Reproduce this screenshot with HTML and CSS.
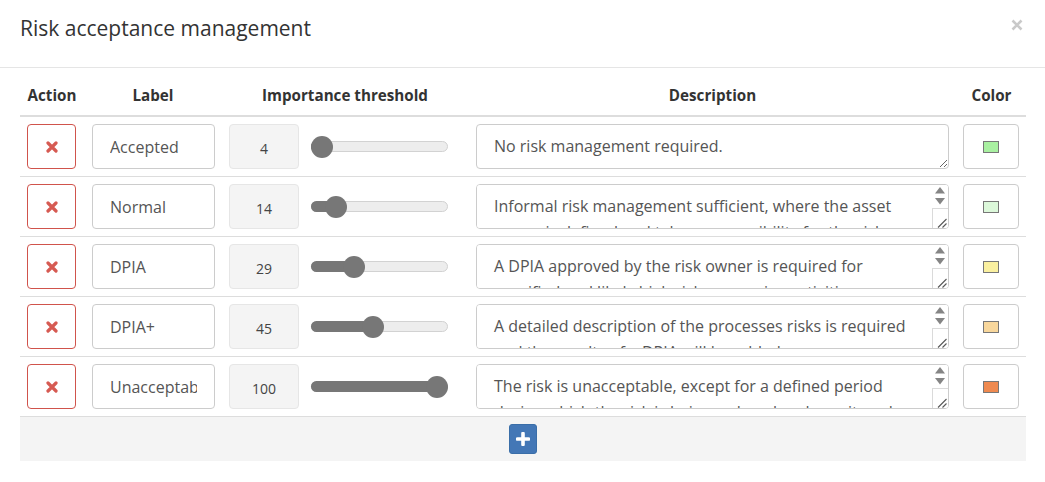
FILE: index.html
```html
<!DOCTYPE html>
<html>
<head>
<meta charset="utf-8">
<link rel="stylesheet" href="styles.css">
</head>
<body>
<div class="modal">
  <div class="modal-header">
    <h4 class="modal-title">Risk acceptance management</h4>
    <button class="close" type="button" aria-label="Close"><svg viewBox="0 0 12 12" width="12" height="12"><path d="M1.5 1.5L10.5 10.5M10.5 1.5L1.5 10.5" stroke="#c9c9c9" stroke-width="2.6"/></svg></button>
  </div>
  <div class="modal-body">
    <table class="grid">
      <colgroup>
        <col class="c-action"><col class="c-label"><col class="c-imp"><col class="c-desc"><col class="c-color">
      </colgroup>
      <thead>
        <tr><th>Action</th><th>Label</th><th>Importance threshold</th><th>Description</th><th>Color</th></tr>
      </thead>
      <tbody>
        <tr>
          <td class="td-action"><button class="btn-del"><svg viewBox="0 0 12 12" width="12" height="12"><path d="M2 2L10 10M10 2L2 10" stroke="#d65a52" stroke-width="3.2" stroke-linecap="round"/></svg></button></td>
          <td class="td-label"><input class="txt" value="Accepted"></td>
          <td class="td-imp"><div class="imp"><div class="num">4</div><div class="slider"><div class="fill" style="width:11px"></div><div class="thumb" style="left:0px"></div></div></div></td>
          <td class="td-desc"><div class="desc-wrap"><textarea class="desc">No risk management required.</textarea></div></td>
          <td class="td-color"><button class="btn-color"><span class="swatch" style="background:#a9f0a1"></span></button></td>
        </tr>
        <tr>
          <td class="td-action"><button class="btn-del"><svg viewBox="0 0 12 12" width="12" height="12"><path d="M2 2L10 10M10 2L2 10" stroke="#d65a52" stroke-width="3.2" stroke-linecap="round"/></svg></button></td>
          <td class="td-label"><input class="txt" value="Normal"></td>
          <td class="td-imp"><div class="imp"><div class="num">14</div><div class="slider"><div class="fill" style="width:25px"></div><div class="thumb" style="left:14px"></div></div></div></td>
          <td class="td-desc"><div class="desc-wrap"><textarea class="desc scroll">Informal risk management sufficient, where the asset owner is defined and takes responsibility for the risk.</textarea><span class="sbar"><svg viewBox="0 0 16 43" width="16" height="43"><path d="M3 8.5L8 2L13 8.5Z" fill="#858585"/><path d="M3 13L13 13L8 19.5Z" fill="#858585"/><path d="M0 23.5H16M0.5 23.5V43" stroke="#dadada" stroke-width="1" fill="none"/><path d="M14.5 34L6 42.5M14.5 38.5L10.5 42.5" stroke="#5a5a5a" stroke-width="1.1" fill="none"/></svg></span></div></td>
          <td class="td-color"><button class="btn-color"><span class="swatch" style="background:#dcf8da"></span></button></td>
        </tr>
        <tr>
          <td class="td-action"><button class="btn-del"><svg viewBox="0 0 12 12" width="12" height="12"><path d="M2 2L10 10M10 2L2 10" stroke="#d65a52" stroke-width="3.2" stroke-linecap="round"/></svg></button></td>
          <td class="td-label"><input class="txt" value="DPIA"></td>
          <td class="td-imp"><div class="imp"><div class="num">29</div><div class="slider"><div class="fill" style="width:43px"></div><div class="thumb" style="left:32px"></div></div></div></td>
          <td class="td-desc"><div class="desc-wrap"><textarea class="desc scroll">A DPIA approved by the risk owner is required for specified and likely high risk processing activities.</textarea><span class="sbar"><svg viewBox="0 0 16 43" width="16" height="43"><path d="M3 8.5L8 2L13 8.5Z" fill="#858585"/><path d="M3 13L13 13L8 19.5Z" fill="#858585"/><path d="M0 23.5H16M0.5 23.5V43" stroke="#dadada" stroke-width="1" fill="none"/><path d="M14.5 34L6 42.5M14.5 38.5L10.5 42.5" stroke="#5a5a5a" stroke-width="1.1" fill="none"/></svg></span></div></td>
          <td class="td-color"><button class="btn-color"><span class="swatch" style="background:#faf0a0"></span></button></td>
        </tr>
        <tr>
          <td class="td-action"><button class="btn-del"><svg viewBox="0 0 12 12" width="12" height="12"><path d="M2 2L10 10M10 2L2 10" stroke="#d65a52" stroke-width="3.2" stroke-linecap="round"/></svg></button></td>
          <td class="td-label"><input class="txt" value="DPIA+"></td>
          <td class="td-imp"><div class="imp"><div class="num">45</div><div class="slider"><div class="fill" style="width:62px"></div><div class="thumb" style="left:51px"></div></div></div></td>
          <td class="td-desc"><div class="desc-wrap"><textarea class="desc scroll">A detailed description of the processes risks is required and the results of a DPIA will be added.</textarea><span class="sbar"><svg viewBox="0 0 16 43" width="16" height="43"><path d="M3 8.5L8 2L13 8.5Z" fill="#858585"/><path d="M3 13L13 13L8 19.5Z" fill="#858585"/><path d="M0 23.5H16M0.5 23.5V43" stroke="#dadada" stroke-width="1" fill="none"/><path d="M14.5 34L6 42.5M14.5 38.5L10.5 42.5" stroke="#5a5a5a" stroke-width="1.1" fill="none"/></svg></span></div></td>
          <td class="td-color"><button class="btn-color"><span class="swatch" style="background:#f8d79c"></span></button></td>
        </tr>
        <tr>
          <td class="td-action"><button class="btn-del"><svg viewBox="0 0 12 12" width="12" height="12"><path d="M2 2L10 10M10 2L2 10" stroke="#d65a52" stroke-width="3.2" stroke-linecap="round"/></svg></button></td>
          <td class="td-label"><input class="txt" value="Unacceptable"></td>
          <td class="td-imp"><div class="imp"><div class="num">100</div><div class="slider"><div class="fill" style="width:126px"></div><div class="thumb" style="left:115px"></div></div></div></td>
          <td class="td-desc"><div class="desc-wrap"><textarea class="desc scroll">The risk is unacceptable, except for a defined period during which the risk is being reduced and monitored.</textarea><span class="sbar"><svg viewBox="0 0 16 43" width="16" height="43"><path d="M3 8.5L8 2L13 8.5Z" fill="#858585"/><path d="M3 13L13 13L8 19.5Z" fill="#858585"/><path d="M0 23.5H16M0.5 23.5V43" stroke="#dadada" stroke-width="1" fill="none"/><path d="M14.5 34L6 42.5M14.5 38.5L10.5 42.5" stroke="#5a5a5a" stroke-width="1.1" fill="none"/></svg></span></div></td>
          <td class="td-color"><button class="btn-color"><span class="swatch" style="background:#ef8a50"></span></button></td>
        </tr>
      </tbody>
      <tfoot>
        <tr><td colspan="5" class="foot"><button class="btn-add"><svg viewBox="0 0 14 14" width="14" height="14"><path d="M7 1.5V12.5M1.5 7H12.5" stroke="#fff" stroke-width="3.6" stroke-linecap="round"/></svg></button></td></tr>
      </tfoot>
    </table>
  </div>
</div>
</body>
</html>
```

FILE: styles.css
```css
* { box-sizing: border-box; }
html, body { margin: 0; padding: 0; background: #fff; }
body {
  font-family: "Open Sans", "Liberation Sans", sans-serif;
  color: #555;
  width: 1045px;
  height: 482px;
  overflow: hidden;
}
.modal { width: 1045px; }
.modal-header {
  display: flex;
  justify-content: space-between;
  align-items: flex-start;
  height: 68px;
  padding: 13px 20px 0 20px;
  border-bottom: 1px solid #e5e5e5;
}
.modal-title {
  margin: 0;
  font-size: 21px;
  font-weight: 400;
  line-height: 30px;
  color: #333;
}
.close {
  display: block;
  border: 0;
  background: none;
  padding: 0;
  margin: 6px 2px 0 0;
  width: 12px;
  height: 12px;
  line-height: 0;
}
.modal-body { padding: 10px 19px 0 20px; }
.grid {
  table-layout: fixed;
  width: 1006px;
  border-collapse: collapse;
}
.c-action { width: 64px; }
.c-label { width: 138px; }
.c-imp { width: 246px; }
.c-desc { width: 489px; }
.c-color { width: 69px; }
.grid th {
  font-size: 15.2px;
  font-weight: 700;
  color: #333;
  line-height: 20px;
  padding: 7px 0 10px;
  text-align: center;
  border-bottom: 2px solid #ddd;
}
.grid tbody td {
  padding: 7px 0;
  border-bottom: 1px solid #ddd;
  vertical-align: middle;
  height: 60px;
}
.td-action { padding-left: 7px !important; }
.td-label { padding-left: 8px !important; }
.td-imp { padding-left: 7px !important; }
.td-desc { padding-left: 8px !important; }
.td-color { padding-left: 6px !important; }
.btn-del {
  display: flex;
  align-items: center;
  justify-content: center;
  width: 49px;
  height: 45px;
  border: 1px solid #d0534c;
  border-radius: 4px;
  background: #fff;
  padding: 0;
}
.txt {
  display: block;
  width: 123px;
  height: 45px;
  padding: 0 17px;
  border: 1px solid #ccc;
  border-radius: 4px;
  font-family: inherit;
  font-size: 16px;
  color: #555;
  outline: none;
}
.imp {
  display: flex;
  align-items: center;
  gap: 12px;
}
.num {
  width: 70px;
  height: 45px;
  display: flex;
  align-items: center;
  justify-content: center;
  padding-top: 4px;
  background: #f4f4f4;
  border: 1px solid #e6e6e6;
  border-radius: 4px;
  font-size: 14px;
  color: #444;
}
.slider {
  position: relative;
  width: 137px;
  height: 11px;
  border: 1px solid #d2d2d2;
  border-radius: 6px;
  background: #ededed;
}
.fill {
  position: absolute;
  left: -1px;
  top: -1px;
  height: 11px;
  border-radius: 6px 0 0 6px;
  background: #777;
}
.thumb {
  position: absolute;
  top: -6.5px;
  margin-left: -1px;
  width: 22px;
  height: 22px;
  border-radius: 50%;
  background: #777;
}
.desc-wrap {
  position: relative;
  width: 473px;
  height: 45px;
}
.desc {
  display: block;
  width: 473px;
  height: 45px;
  padding: 8px 17px;
  border: 1px solid #ccc;
  border-radius: 4px;
  font-family: inherit;
  font-size: 16px;
  line-height: 26px;
  color: #555;
  outline: none;
}
.desc.scroll { padding-right: 33px; }
.sbar {
  position: absolute;
  top: 1px;
  right: 1px;
  width: 16px;
  height: 43px;
  background: #fff;
  border-radius: 0 3px 3px 0;
  line-height: 0;
}
.sbar svg { display: block; }
.btn-color {
  display: flex;
  align-items: center;
  justify-content: center;
  width: 56px;
  height: 45px;
  border: 1px solid #ccc;
  border-radius: 4px;
  background: #fff;
  padding: 0;
}
.swatch {
  display: block;
  width: 16px;
  height: 12px;
  border: 1px solid #777;
}
.foot {
  background: #f4f4f4;
  height: 44px;
  padding: 0;
  text-align: center;
  vertical-align: middle;
}
.btn-add {
  display: inline-flex;
  align-items: center;
  justify-content: center;
  width: 28px;
  height: 30px;
  margin-top: 1px;
  padding: 0;
  border: 1px solid #3a6ea8;
  border-radius: 3px;
  background: #4377b6;
  vertical-align: middle;
}
```
